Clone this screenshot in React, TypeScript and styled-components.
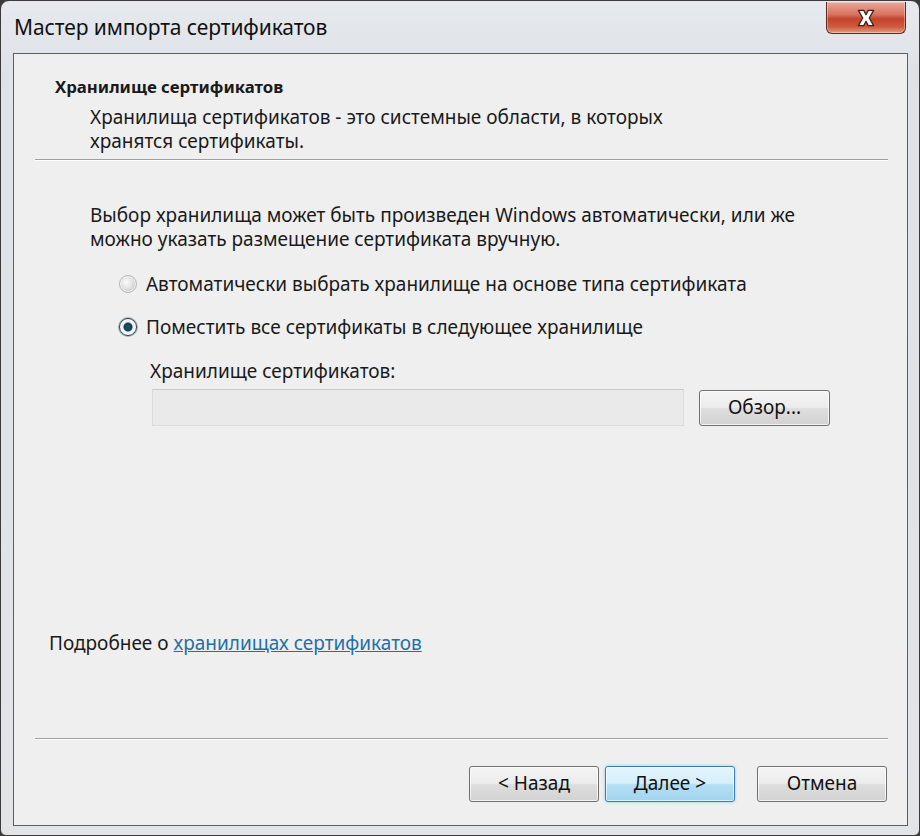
import * as React from "react";
import styled, { createGlobalStyle } from "styled-components";

const GlobalStyle = createGlobalStyle`
  html, body {
    margin: 0;
    padding: 0;
    background: #3a3a3a;
  }
  body {
    font-family: "Noto Sans", "Open Sans", sans-serif;
    color: #1a1a1a;
  }
`;

export const Window = styled.div`
  width: 920px;
  height: 836px;
  box-sizing: border-box;
  display: flex;
  flex-direction: column;
  border: 1px solid #3b3b3b;
  border-radius: 9px 9px 6px 6px;
  background: linear-gradient(180deg, #e6e9ed 0%, #dfe3e7 8%, #e2e4e6 100%);
  overflow: hidden;
`;

export const TitleBar = styled.div`
  height: 52px;
  flex: none;
  display: flex;
  justify-content: space-between;
  align-items: flex-start;
  padding: 0 13px 0 13px;
`;

export const Title = styled.div`
  margin-top: 12px;
  font-size: 21px;
  letter-spacing: -0.1px;
  color: #111;
`;

export const CloseButton = styled.div`
  width: 80px;
  height: 32px;
  margin-top: 1px;
  box-sizing: border-box;
  border: 1px solid #5a2a24;
  border-top: none;
  border-radius: 0 0 6px 6px;
  background: linear-gradient(
    180deg,
    #e9a99c 0%,
    #d8735f 40%,
    #c2432c 55%,
    #cf5a3f 80%,
    #e39c7c 100%
  );
  box-shadow: inset 0 0 0 1px rgba(255, 255, 255, 0.35);
  display: flex;
  justify-content: center;
  align-items: center;
`;

export const Client = styled.div`
  flex: 1;
  margin: 0 11px 9px 12px;
  border: 1px solid #5d5d5d;
  background: #efefef;
  display: flex;
  flex-direction: column;
`;

export const Header = styled.div`
  padding: 23px 20px 0 20px;
`;

export const HeaderTitle = styled.div`
  font-size: 16.8px;
  font-weight: 700;
  line-height: 20px;
  margin-left: 21px;
`;

export const HeaderText = styled.div`
  font-size: 19px;
  line-height: 24px;
  margin: 8px 0 0 56px;
`;

export const Separator = styled.div<{ $top: number }>`
  height: 1px;
  background: #a0a0a0;
  border-bottom: 1px solid #ffffff;
  margin: ${(p) => p.$top}px 19px 0 21px;
`;

export const Body = styled.div`
  flex: 1;
  display: flex;
  flex-direction: column;
  padding: 42px 0 0 35px;
`;

export const Content = styled.div`
  margin-left: 41px;
  display: flex;
  flex-direction: column;
`;

export const Paragraph = styled.div`
  font-size: 19px;
  line-height: 24px;
`;

export const Options = styled.div`
  display: flex;
  flex-direction: column;
  gap: 19px;
  margin: 21px 0 0 29px;
`;

export const Option = styled.label`
  display: flex;
  align-items: center;
  gap: 9px;
  font-size: 19px;
  line-height: 24px;
`;

export const Radio = styled.span<{ $checked?: boolean }>`
  width: 18px;
  height: 18px;
  box-sizing: border-box;
  border-radius: 50%;
  border: 1px solid ${(p) => (p.$checked ? "#2f3b44" : "#b8b8b8")};
  background: ${(p) =>
    p.$checked
      ? "radial-gradient(circle at 50% 50%, #0f5a6e 0, #1b3f4f 4px, #e8eef2 5px, #ffffff 8px)"
      : "radial-gradient(circle at 40% 40%, #fafafa 0, #e2e2e2 6px, #cfcfcf 9px)"};
  box-shadow: ${(p) =>
    p.$checked ? "0 0 0 1px #9fb6c4" : "inset 0 0 0 1px #f2f2f2"};
  flex: none;
`;

export const StoreBlock = styled.div`
  margin: 20px 0 0 60px;
  display: flex;
  flex-direction: column;
`;

export const StoreLabel = styled.div`
  font-size: 19px;
  line-height: 24px;
`;

export const StoreRow = styled.div`
  display: flex;
  align-items: center;
  gap: 15px;
  margin-top: 6px;
`;

export const StoreInput = styled.div`
  width: 532px;
  height: 37px;
  box-sizing: border-box;
  margin-left: 2px;
  border: 1px solid #dcdcdc;
  border-top-color: #c9c9c9;
  background: #eaeaea;
`;

export const Button = styled.button<{ $default?: boolean; $w?: number }>`
  width: ${(p) => p.$w || 130}px;
  height: 36px;
  box-sizing: border-box;
  border-radius: 3px;
  font-family: "Noto Sans", "Open Sans", sans-serif;
  font-size: 19px;
  color: #111;
  padding: 0 0 2px 0;
  border: 1px solid ${(p) => (p.$default ? "#3c7fb1" : "#707070")};
  background: ${(p) =>
    p.$default
      ? "linear-gradient(180deg, #e5f4fc 0%, #d5eefa 48%, #b4dff5 52%, #a1d4f0 100%)"
      : "linear-gradient(180deg, #f4f4f4 0%, #ececec 48%, #dedede 52%, #d2d2d2 100%)"};
  box-shadow: ${(p) =>
    p.$default
      ? "inset 0 0 0 1px rgba(255,255,255,0.6), 0 0 3px rgba(100,190,230,0.8)"
      : "inset 0 0 0 1px rgba(255,255,255,0.7)"};
`;

export const LinkRow = styled.div`
  margin: auto 0 83px 0;
  font-size: 19px;
  line-height: 24px;
`;

export const Link = styled.a`
  color: #1f6fa9;
  text-decoration: underline;
`;

export const Footer = styled.div`
  display: flex;
  justify-content: flex-end;
  align-items: center;
  padding: 26px 20px 23px 0;
`;

export const NavGroup = styled.div`
  display: flex;
  gap: 6px;
  margin-right: 22px;
`;

const CloseIcon = () => (
  <svg width="24" height="20" viewBox="0 0 22 18">
    <path
      d="M4 2 L9 2 L11 6 L13 2 L18 2 L14 9 L18 16 L13 16 L11 12 L9 16 L4 16 L8 9 Z"
      fill="#ffffff"
      stroke="#4a1f17"
      strokeWidth="1.2"
      strokeLinejoin="round"
    />
  </svg>
);

export default function App() {
  return (
    <>
      <GlobalStyle />
      <Window>
        <TitleBar>
          <Title>Мастер импорта сертификатов</Title>
          <CloseButton>
            <CloseIcon />
          </CloseButton>
        </TitleBar>
        <Client>
          <Header>
            <HeaderTitle>Хранилище сертификатов</HeaderTitle>
            <HeaderText>
              Хранилища сертификатов - это системные области, в которых
              <br />
              хранятся сертификаты.
            </HeaderText>
          </Header>
          <Separator $top={6} />
          <Body>
            <Content>
              <Paragraph>
                Выбор хранилища может быть произведен Windows автоматически, или же
                <br />
                можно указать размещение сертификата вручную.
              </Paragraph>
              <Options>
                <Option>
                  <Radio />
                  Автоматически выбрать хранилище на основе типа сертификата
                </Option>
                <Option>
                  <Radio $checked />
                  Поместить все сертификаты в следующее хранилище
                </Option>
              </Options>
              <StoreBlock>
                <StoreLabel>Хранилище сертификатов:</StoreLabel>
                <StoreRow>
                  <StoreInput />
                  <Button $w={131}>Обзор...</Button>
                </StoreRow>
              </StoreBlock>
            </Content>
            <LinkRow>
              Подробнее о <Link>хранилищах сертификатов</Link>
            </LinkRow>
          </Body>
          <Separator $top={0} />
          <Footer>
            <NavGroup>
              <Button>&lt; Назад</Button>
              <Button $default>Далее &gt;</Button>
            </NavGroup>
            <Button>Отмена</Button>
          </Footer>
        </Client>
      </Window>
    </>
  );
}
